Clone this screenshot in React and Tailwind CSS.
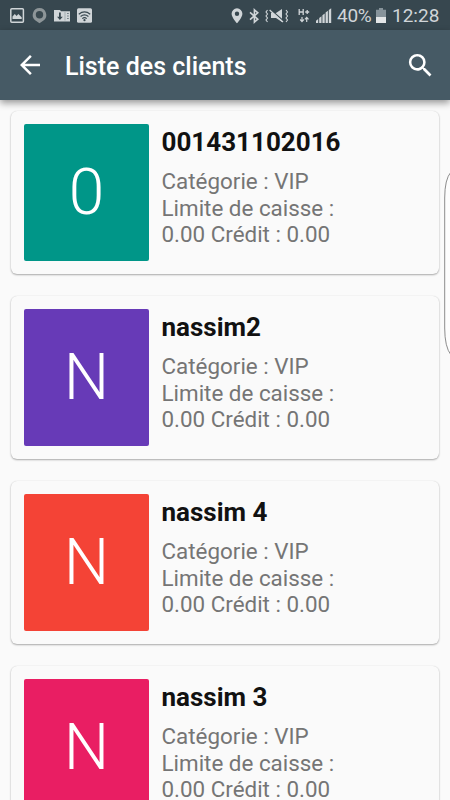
import { MdArrowBack, MdSearch } from 'react-icons/md';

const clients = [
  { name: '001431102016', letter: '0', color: 'bg-[#009688]' },
  { name: 'nassim2', letter: 'N', color: 'bg-[#673ab7]' },
  { name: 'nassim 4', letter: 'N', color: 'bg-[#f44336]' },
  { name: 'nassim 3', letter: 'N', color: 'bg-[#e91e63]' },
];

const NotificationIcons = () => (
  <svg width="84" height="16" viewBox="0 0 84 16" className="mt-px ml-[10px]">
    {/* picture */}
    <rect x="0.8" y="0.8" width="12.6" height="13.4" rx="1" fill="none" stroke="#d0d5d8" strokeWidth="1.5" />
    <path d="M2.5 11V8.5l2.3-2.4 1.8 1.8 1.7-1.8 3.4 3.2V11z" fill="#d0d5d8" />
    {/* ring */}
    <path d="M29.5 0a7 7 0 0 1 4 12.6L29.5 15.2l-4-2.6A7 7 0 0 1 29.5 0z" fill="#8d9598" />
    <circle cx="29.5" cy="6.8" r="3.7" fill="#39484f" />
    {/* download */}
    <path d="M44 2h6l1 1.2h9V13.5H44z" fill="#d0d5d8" />
    <path d="M49 4.5h1.8v4.2h2l-2.9 3.4L47 8.7h2z" fill="#37474f" />
    <path d="M55 4v8.5" stroke="#9aa4a9" strokeWidth="0.8" />
    <path d="M57 5.5h1.8M57 8h1.8M57 10.5h1.8" stroke="#75838a" strokeWidth="1" />
    {/* wifi */}
    <rect x="67" y="0.2" width="15" height="14.6" rx="1.5" fill="#d0d5d8" />
    <path d="M68.8 6.2q5.7-4.5 11.4 0M70.6 8.5q3.9-3.1 7.8 0M72.3 10.6q2.2-1.8 4.4 0" fill="none" stroke="#37474f" strokeWidth="1.2" />
    <circle cx="74.5" cy="12.2" r="1.1" fill="#37474f" />
  </svg>
);

const PinIcon = () => (
  <svg width="12" height="16" viewBox="0 0 12 16" fill="#d0d5d8">
    <path
      fillRule="evenodd"
      d="M6 .3A5.4 5.4 0 0 0 .6 5.7C.6 9.5 6 15.3 6 15.3s5.4-5.8 5.4-9.6A5.4 5.4 0 0 0 6 .3zm0 3.2a2.2 2.2 0 1 1 0 4.4 2.2 2.2 0 0 1 0-4.4z"
    />
  </svg>
);

const BluetoothIcon = () => (
  <svg width="11" height="16" viewBox="0 0 11 16" fill="none" stroke="#d0d5d8" strokeWidth="1.6">
    <path d="M1 4.3l7.8 6.9-3.4 3V1.8l3.4 3L1 11.7" />
  </svg>
);

const MuteIcon = () => (
  <svg width="24" height="16" viewBox="0 0 24 16" fill="none" stroke="#d0d5d8">
    <path d="M2.5 2l-1.5 2 1.5 2L1 8l1.5 2L1 12l1.5 2M21 2l1.5 2L21 6l1.5 2-1.5 2 1.5 2-1.5 2" strokeWidth="1.1" />
    <path d="M6 5h5l6-4v13l-6-4H6z" fill="#d0d5d8" stroke="none" />
    <path d="M5.3 1.2L19 13.4" stroke="#37474f" strokeWidth="1.4" />
    <path d="M4.6 2L18 14" strokeWidth="1.3" />
  </svg>
);

const DataIcon = () => (
  <svg width="13" height="16" viewBox="0 0 13 16" fill="none" stroke="#d0d5d8">
    <path d="M1.2 1v6M5.2 1v6M1.2 4h4M7.2 4h4M9.2 2v4" strokeWidth="1.3" />
    <path d="M4 9v4M2.2 11.5L4 13.6l1.8-2.1M8.7 14v-4M6.9 11.3l1.8-2 1.8 2" strokeWidth="1.2" />
  </svg>
);

const SignalIcon = () => (
  <svg width="16" height="16" viewBox="0 0 16 16" fill="#d0d5d8">
    <path d="M0 15v-2.2L2.2 11v4zM3.2 15V9.9l2.3-1.7V15zM6.4 15V7.2l2.3-1.7V15zM9.6 15V4.5L11.9 2.7V15zM12.8 15V1.9l2.4-1.7V15z" />
  </svg>
);

const BatteryIcon = () => (
  <svg width="10" height="15" viewBox="0 0 10 15">
    <path d="M3 0h4v1.7h3V9H0V1.7h3z" fill="#87939a" />
    <path d="M0 9h10v6H0z" fill="#e4e6e7" />
  </svg>
);

const StatusBar = () => (
  <div className="flex h-[30px] shrink-0 items-center bg-[#37474f] text-[#d0d5d8]">
    <NotificationIcons />
    <div className="ml-auto flex items-center pt-px">
      <span className="mr-[6px]"><PinIcon /></span>
      <span className="mr-[5px]"><BluetoothIcon /></span>
      <span className="mr-[9px]"><MuteIcon /></span>
      <span className="mr-[5px]"><DataIcon /></span>
      <span className="mr-[5px]"><SignalIcon /></span>
      <span className="w-[39px] pt-px text-[19px] leading-[28px] tracking-[-0.3px]">40%</span>
      <BatteryIcon />
      <span className="ml-[6px] w-[58px] pt-px text-[19px] leading-[28px]">12:28</span>
    </div>
  </div>
);

const ClientCard = ({ client }) => (
  <div className="flex h-[163px] shrink-0 rounded-[6px] bg-[#fafafa] p-[13px] shadow-[0_1px_2px_rgba(0,0,0,0.32),0_0_1px_rgba(0,0,0,0.12)]">
    <div
      className={`flex h-[137px] w-[125px] shrink-0 items-center justify-center rounded-[2px] pt-px text-[64px] font-light text-white ${client.color}`}
    >
      {client.letter}
    </div>
    <div className="ml-[12.5px] pt-[3px]">
      <h2 className="text-[26px] leading-[30px] font-bold text-[#111]">{client.name}</h2>
      <p className="mt-[11px] w-[190px] text-[22.4px] leading-[26.5px] text-[#757575]">
        Catégorie : VIP
        <br />
        Limite de caisse :
        <br />
        0.00 Crédit : 0.00
      </p>
    </div>
  </div>
);

export default function App() {
  return (
    <div className="relative flex h-[800px] w-[450px] flex-col overflow-hidden bg-[#fafafa] font-['Roboto',sans-serif]">
      <StatusBar />
      <header className="z-10 flex h-[70px] shrink-0 items-center bg-[#465a65] text-white shadow-[0_3px_7px_rgba(0,0,0,0.4)]">
        <MdArrowBack className="ml-[15px] h-[30px] w-[30px]" />
        <h1 className="ml-[20px] pt-[3px] text-[25px] font-medium">Liste des clients</h1>
        <MdSearch className="mr-[14px] ml-auto h-[31px] w-[31px]" />
      </header>
      <main className="flex flex-col gap-[22px] px-[11px] pt-[11px]">
        {clients.map((client) => (
          <ClientCard key={client.name} client={client} />
        ))}
      </main>

      {/* edge panel handle */}
      <svg width="8" height="190" viewBox="0 0 8 190" className="absolute top-[168px] right-0">
        <path d="M9 4Q2.7 11 2.7 30V160Q2.7 179 9 187" fill="#fdfdfd" stroke="#8c8c8c" strokeWidth="1" />
      </svg>
    </div>
  );
}
